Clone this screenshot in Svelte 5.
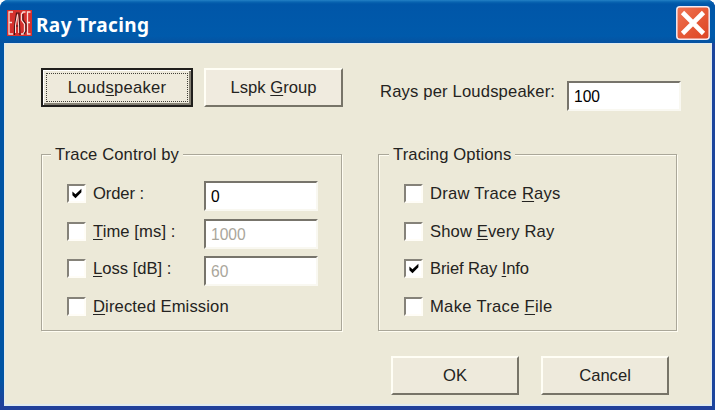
<script>
  const controls = [
    { pre: 'Order :', key: '', post: '', checked: true, value: '0', ls: -0.1 },
    { pre: '', key: 'T', post: 'ime [ms] :', value: '1000', disabled: true, ls: 0.1 },
    { pre: '', key: 'L', post: 'oss [dB] :', value: '60', disabled: true, ls: 0 },
    { pre: '', key: 'D', post: 'irected Emission', ls: 0.12 }
  ];
  const options = [
    { pre: 'Draw Trace ', key: 'R', post: 'ays', ls: 0.22 },
    { pre: 'Show ', key: 'E', post: 'very Ray', ls: 0.12 },
    { pre: 'Brief Ray ', key: 'I', post: 'nfo', checked: true, ls: -0.12 },
    { pre: 'Make Trace ', key: 'F', post: 'ile', ls: 0.3 }
  ];
</script>

{#snippet checkRow(item)}
  <div class="row">
    <span class="box">
      {#if item.checked}
        <svg width="12" height="12" viewBox="0 0 12 12"><path d="M1.4 3.6 4.5 6.2 10.4.8V4.2L4.5 10.2 1.4 7.2Z" fill="#000" /></svg>
      {/if}
    </span>
    <span class="label" style:letter-spacing="{item.ls}px">{item.pre}<u>{item.key}</u>{item.post}</span>
    {#if item.value}
      <div class="field" class:disabled={item.disabled}><span>{item.value}</span></div>
    {/if}
  </div>
{/snippet}

<div class="window">
  <header>
    <svg class="logo" width="25" height="26" viewBox="0 0 25 26">
      <rect width="25" height="26" fill="#d5302d" />
      <path d="M6 2H2V24H6M2 12.5H5M18.5 2H16L14.5 4V10L17.5 14V22L16 24H14M23.5 2H20.5V24H23.5M20.5 12.5H23" fill="none" stroke="#f8ddd8" stroke-width="1.3" />
      <path d="M7.5 25V17L9.5 3H12L13 25M8 16H12M16 4V10L19 14V21L17 24" fill="none" stroke="#45191c" stroke-width="1.2" />
      <path d="M8.5 23V15L10.5 4.5 11.6 15V23" fill="none" stroke="#f8ddd8" stroke-width="1" />
    </svg>
    <h1>Ray Tracing</h1>
    <div class="close">
      <svg width="34" height="34" viewBox="0 0 34 34">
        <defs><linearGradient id="red" x1="0" y1="0" x2="1" y2="1"><stop stop-color="#ef7555" /><stop offset=".5" stop-color="#e65a37" /><stop offset="1" stop-color="#dc4424" /></linearGradient></defs>
        <rect x=".8" y=".8" width="32.4" height="32.4" rx="3" fill="url(#red)" stroke="#f5e9ef" stroke-width="1.5" />
        <path d="M6.5 6.5 27.5 27.5M27.5 6.5 6.5 27.5" stroke="#fff" stroke-width="4.6" />
      </svg>
    </div>
  </header>
  <main>
    <div class="top">
      <div class="button focused"><span class="focus"></span><span style:letter-spacing="0.25px">Loud<u>s</u>peaker</span></div>
      <div class="button group-button"><span>Lspk <u>G</u>roup</span></div>
      <span class="rays">Rays per Loudspeaker:</span>
      <div class="field count"><span>100</span></div>
    </div>
    <div class="groups">
      <section class="left">
        <h2>Trace Control by</h2>
        {#each controls as item}{@render checkRow(item)}{/each}
      </section>
      <section class="right">
        <h2>Tracing Options</h2>
        {#each options as item}{@render checkRow(item)}{/each}
      </section>
    </div>
    <footer>
      <div class="button"><span>OK</span></div>
      <div class="button"><span>Cancel</span></div>
    </footer>
  </main>
</div>

<style>
  :global(body) { margin: 0; background: #fff; }
  .window { box-sizing: border-box; width: 715px; height: 410px; padding: 0 3px 4px 4px; overflow: hidden; border-radius: 8px 8px 0 0; background: linear-gradient(#0054a4 0, #0054a4 380px, #21409a 405px); box-shadow: inset -3px 0 #1c459d; font: 16.6px/20px "Liberation Sans", Arial, sans-serif; color: #242321; }
  header { height: 43px; box-sizing: border-box; display: flex; margin: 0 -3px 0 -4px; padding: 10px 5px 0 7px; background: linear-gradient(#2381c5 0, #0864b1 2px, #0056a8 4px, #005aab 36px, #0652a0 43px); }
  .logo { display: block; }
  h1 { margin: 2px 0 0 4px; font: 700 19px/26px "Noto Sans", "Open Sans", sans-serif; color: #fff; white-space: nowrap; letter-spacing: .4px; }
  .close { margin: -4px 0 0 auto; }
  .close svg { display: block; }
  main { height: 363px; box-sizing: border-box; background: #ece9d8; border: solid #dfeaf0; border-width: 1px 1px 2px; padding: 24px 0 0 36px; }
  .top { height: 86px; display: flex; align-items: flex-start; }
  .button { position: relative; box-sizing: border-box; display: flex; align-items: center; justify-content: center; height: 39px; border: 2px solid; border-color: #fffef5 #777468 #777468 #fffef5; background: #eeeadc; white-space: pre; }
  .top .button { width: 152px; padding-top: 1px; }
  .top .group-button { width: 139px; margin-left: 11px; background: #f0ebdf; }
  .button.focused { border-color: #201f1c; box-shadow: inset 1px 1px #fff, inset -2px -2px #858174; }
  .focus { position: absolute; inset: 3px; border: 1px dotted #424039; }
  u { text-decoration-thickness: 1px; text-underline-offset: 2px; text-decoration-skip-ink: none; }
  .rays { width: 187px; margin: 14px 0 0 37px; white-space: nowrap; letter-spacing: .17px; }
  .field { box-sizing: border-box; width: 114px; height: 30px; padding: 4px 0 0 5px; border: 2px solid; border-color: #77746b #f9f8f1 #f9f8f1 #77746b; background: #fff; color: #000; }
  .field span { display: inline-block; transform: scaleX(.94); transform-origin: left; }
  .disabled { color: #aaa69b; }
  .count { margin-top: 13px; }
  .groups { display: flex; gap: 36px; }
  section { box-sizing: border-box; height: 177px; border: 1px solid #aaa799; box-shadow: 1px 1px #fffdf2, inset 1px 1px #fffdf2; }
  .left { width: 301px; padding-left: 25px; }
  .right { width: 299px; padding-left: 25px; }
  h2 { width: max-content; height: 20px; margin: -10px 0 15px -16px; padding: 0 4px; background: #ece9d8; font: inherit; letter-spacing: .12px; white-space: nowrap; }
  .right h2 { margin-left: -15px; }
  .row { height: 30px; margin-bottom: 7.5px; display: flex; align-items: flex-start; }
  .box { box-sizing: border-box; width: 19px; height: 19px; margin-top: 4px; border: 2px solid; border-color: #858279 #fffdf7 #fffdf7 #858279; background: #fff; display: flex; align-items: center; justify-content: center; }
  .box svg { display: block; }
  .label { margin: 4.4px 0 0 7px; white-space: pre; }
  .row .field { margin: 1px 23px 0 auto; }
  footer { display: flex; gap: 22px; margin: 25px 0 0 350px; }
  footer .button { width: 128px; padding-top: 1px; }
</style>
